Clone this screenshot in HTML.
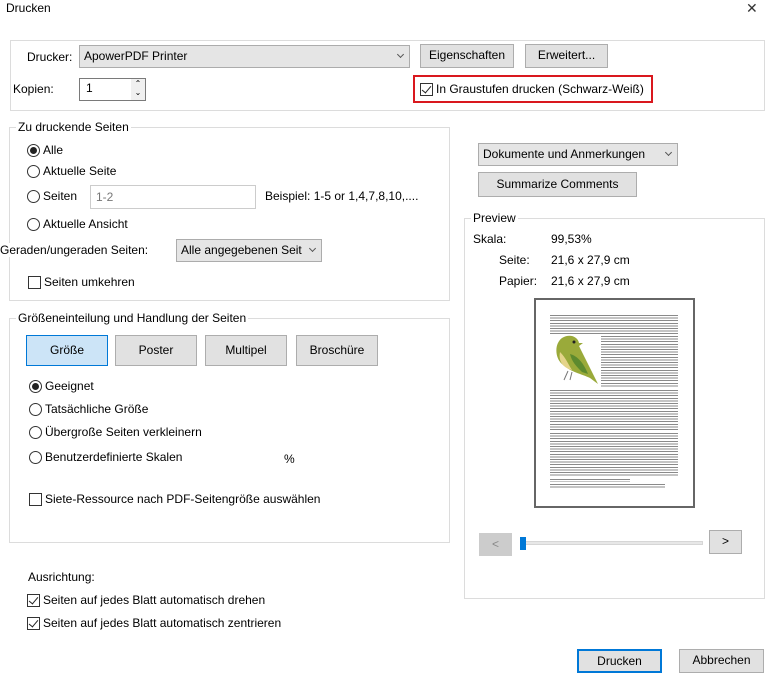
<!DOCTYPE html>
<html><head><meta charset="utf-8"><style>
*{box-sizing:border-box;margin:0;padding:0}
body{width:768px;height:674px;background:#fff;font-family:"Liberation Sans",sans-serif;font-size:12px;color:#000;position:relative;overflow:hidden}
.a{position:absolute;white-space:nowrap}
.t{position:absolute;white-space:nowrap;line-height:14px}
.grp{position:absolute;border:1px solid #dcdcdc}
.leg{position:absolute;background:#fff;padding:0 2px;line-height:14px;white-space:nowrap}
.btn{position:absolute;background:#e1e1e1;border:1px solid #adadad;text-align:center;line-height:20px}
.sel{position:absolute;background:#e5e5e5;border:1px solid #acacac;line-height:20px;padding-left:4px}
.sel:after{content:"";position:absolute;right:6px;top:6px;width:4px;height:4px;border-right:1px solid #555;border-bottom:1px solid #555;transform:rotate(45deg)}
.rad{position:absolute;width:13px;height:13px;border:1px solid #333;border-radius:50%;background:#fff}
.rad.on:after{content:"";position:absolute;left:2px;top:2px;width:7px;height:7px;border-radius:50%;background:#222}
.cb{position:absolute;width:13px;height:13px;border:1px solid #333;background:#fff}
.cb.on:after{content:"";position:absolute;left:3px;top:0px;width:4px;height:8px;border-right:1px solid #222;border-bottom:1px solid #222;transform:rotate(40deg)}
.lines{position:absolute;background:repeating-linear-gradient(to bottom,#8a8a8a 0,#8a8a8a 1px,transparent 1px,transparent 2.6px)}
</style></head><body>
<div class="t" style="left:6px;top:1px">Drucken</div>
<div class="a" style="left:746px;top:0px;font-size:14px;color:#333">✕</div>

<div class="grp" style="left:10px;top:40px;width:755px;height:71px"></div>
<div class="t" style="left:27px;top:50px">Drucker:</div>
<div class="sel" style="left:79px;top:45px;width:331px;height:23px">ApowerPDF Printer</div>
<div class="btn" style="left:420px;top:44px;width:94px;height:24px">Eigenschaften</div>
<div class="btn" style="left:525px;top:44px;width:83px;height:24px">Erweitert...</div>
<div class="t" style="left:13px;top:82px">Kopien:</div>
<div class="a" style="left:79px;top:78px;width:67px;height:23px;border:1px solid #7a7a7a;padding:2px 6px">1</div>
<div class="a" style="left:131px;top:79px;width:14px;height:21px;background:#f0f0f0;font-size:8px;line-height:9px;text-align:center">⌃<br>⌄</div>
<div class="a" style="left:413px;top:75px;width:240px;height:28px;border:2px solid #d9181e"></div>
<div class="cb on" style="left:420px;top:83px"></div>
<div class="t" style="left:436px;top:82px">In Graustufen drucken (Schwarz-Weiß)</div>

<div class="grp" style="left:9px;top:127px;width:441px;height:174px"></div>
<div class="leg" style="left:16px;top:120px">Zu druckende Seiten</div>
<div class="rad on" style="left:27px;top:144px"></div><div class="t" style="left:43px;top:143px">Alle</div>
<div class="rad" style="left:27px;top:165px"></div><div class="t" style="left:43px;top:164px">Aktuelle Seite</div>
<div class="rad" style="left:27px;top:190px"></div><div class="t" style="left:43px;top:189px">Seiten</div>
<div class="a" style="left:90px;top:185px;width:166px;height:24px;border:1px solid #ccc;color:#777;padding:4px 5px">1-2</div>
<div class="t" style="left:265px;top:189px">Beispiel: 1-5 or 1,4,7,8,10,....</div>
<div class="rad" style="left:27px;top:218px"></div><div class="t" style="left:43px;top:217px">Aktuelle Ansicht</div>
<div class="t" style="left:0px;top:243px;background:#fff">Geraden/ungeraden Seiten:</div>
<div class="sel" style="left:176px;top:239px;width:146px;height:23px">Alle angegebenen Seit</div>
<div class="cb" style="left:28px;top:276px"></div><div class="t" style="left:44px;top:275px">Seiten umkehren</div>

<div class="grp" style="left:9px;top:318px;width:441px;height:225px"></div>
<div class="leg" style="left:16px;top:311px">Größeneinteilung und Handlung der Seiten</div>
<div class="btn" style="left:26px;top:335px;width:82px;height:31px;line-height:29px;background:#cce4f7;border-color:#0078d7">Größe</div>
<div class="btn" style="left:115px;top:335px;width:82px;height:31px;line-height:29px">Poster</div>
<div class="btn" style="left:205px;top:335px;width:82px;height:31px;line-height:29px">Multipel</div>
<div class="btn" style="left:296px;top:335px;width:82px;height:31px;line-height:29px">Broschüre</div>
<div class="rad on" style="left:29px;top:380px"></div><div class="t" style="left:45px;top:379px">Geeignet</div>
<div class="rad" style="left:29px;top:403px"></div><div class="t" style="left:45px;top:402px">Tatsächliche Größe</div>
<div class="rad" style="left:29px;top:426px"></div><div class="t" style="left:45px;top:425px">Übergroße Seiten verkleinern</div>
<div class="rad" style="left:29px;top:451px"></div><div class="t" style="left:45px;top:450px">Benutzerdefinierte Skalen</div>
<div class="t" style="left:284px;top:452px">%</div>
<div class="cb" style="left:29px;top:493px"></div><div class="t" style="left:45px;top:492px">Siete-Ressource nach PDF-Seitengröße auswählen</div>

<div class="t" style="left:28px;top:570px">Ausrichtung:</div>
<div class="cb on" style="left:27px;top:594px"></div><div class="t" style="left:43px;top:593px">Seiten auf jedes Blatt automatisch drehen</div>
<div class="cb on" style="left:27px;top:617px"></div><div class="t" style="left:43px;top:616px">Seiten auf jedes Blatt automatisch zentrieren</div>

<div class="sel" style="left:478px;top:143px;width:200px;height:23px">Dokumente und Anmerkungen</div>
<div class="btn" style="left:478px;top:172px;width:159px;height:25px;line-height:23px">Summarize Comments</div>

<div class="grp" style="left:464px;top:218px;width:301px;height:381px"></div>
<div class="leg" style="left:471px;top:211px">Preview</div>
<div class="t" style="left:473px;top:232px">Skala:</div><div class="t" style="left:551px;top:232px">99,53%</div>
<div class="t" style="left:499px;top:253px">Seite:</div><div class="t" style="left:551px;top:253px">21,6 x 27,9 cm</div>
<div class="t" style="left:499px;top:274px">Papier:</div><div class="t" style="left:551px;top:274px">21,6 x 27,9 cm</div>

<div class="a" style="left:534px;top:298px;width:161px;height:210px;border:2px solid #666;background:#fff"></div>
<div class="lines" style="left:550px;top:315px;width:128px;height:19px"></div>
<div class="lines" style="left:601px;top:336px;width:77px;height:52px"></div>
<div class="lines" style="left:550px;top:390px;width:128px;height:40px"></div>
<div class="lines" style="left:550px;top:433px;width:128px;height:44px"></div>
<div class="lines" style="left:550px;top:479px;width:80px;height:3px"></div>
<div class="lines" style="left:550px;top:484px;width:115px;height:5px"></div>
<svg class="a" style="left:552px;top:334px" width="48" height="54" viewBox="0 0 48 54">
<path d="M10 4 C18 -1 26 3 27 9 L31 9 L27 12 C30 18 32 22 36 30 L46 50 L38 44 C30 40 18 38 10 30 C3 24 2 10 10 4Z" fill="#9aaa3a"/>
<path d="M8 18 C6 28 12 34 20 36 C16 30 14 24 8 18Z" fill="#e4d48a"/>
<path d="M18 20 C26 22 32 30 36 40 L30 38 C24 32 20 28 18 20Z" fill="#5d8a2e"/>
<circle cx="22" cy="8" r="1.5" fill="#222"/>
<path d="M16 37 L12 46 M20 38 L18 46" stroke="#777" stroke-width="1"/>
</svg>

<div class="btn" style="left:479px;top:533px;width:33px;height:23px;background:#ccc;border-color:#ccc;color:#888">&lt;</div>
<div class="a" style="left:521px;top:541px;width:182px;height:4px;background:#e7e7e7;border:1px solid #d6d6d6"></div>
<div class="a" style="left:520px;top:537px;width:6px;height:13px;background:#0078d7"></div>
<div class="btn" style="left:709px;top:530px;width:33px;height:24px">&gt;</div>

<div class="btn" style="left:577px;top:649px;width:85px;height:24px;border:2px solid #0078d7;line-height:20px">Drucken</div>
<div class="btn" style="left:679px;top:649px;width:85px;height:24px">Abbrechen</div>
</body></html>
